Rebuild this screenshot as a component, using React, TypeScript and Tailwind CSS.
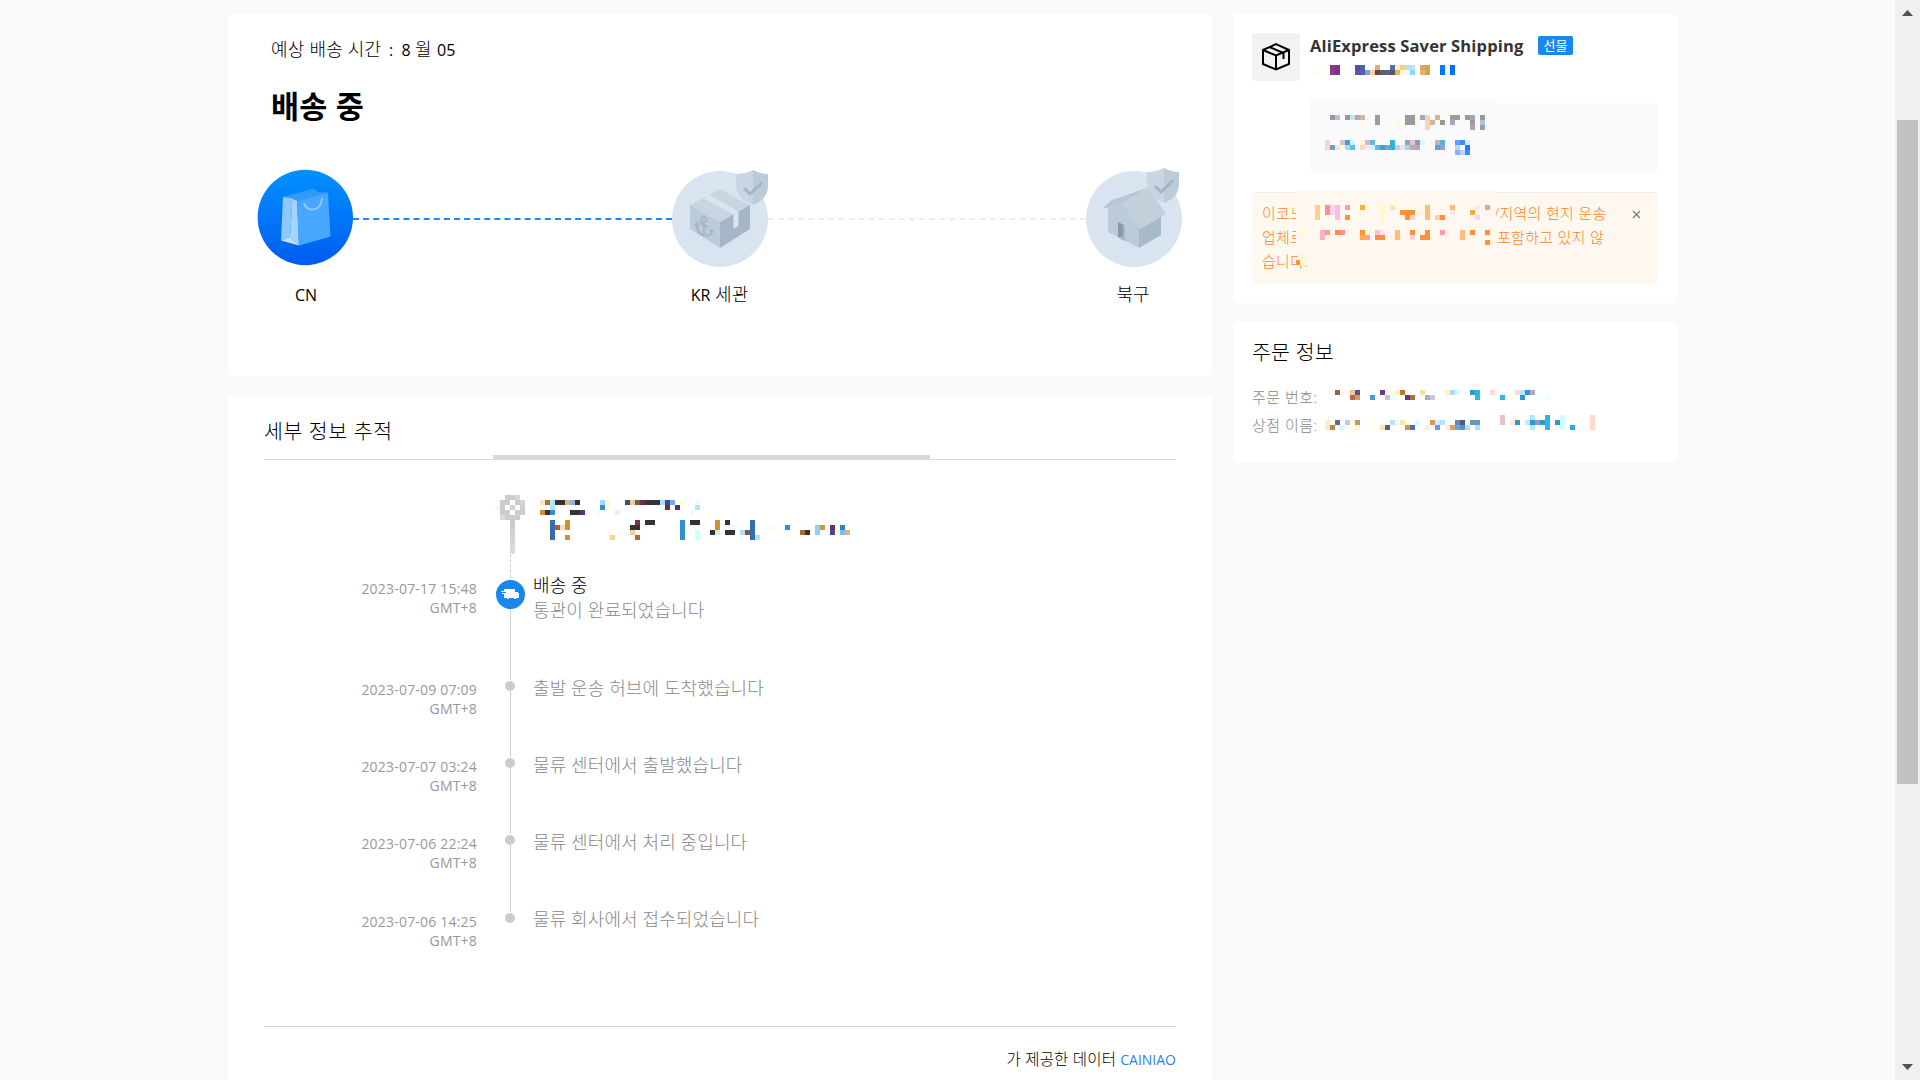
import { X } from "lucide-react";

// x, y, fill, width, height (all in 5px blocks)
type Cell = [number, number, string, number?, number?];

const CARRIER_CODE: Cell[] = [
  [0, 1, "#fffdea"], [3, 0, "#8a3a80"], [4, 0, "#7b378c"], [3, 1, "#8c3f80"], [4, 1, "#73348c"],
  [8, 0, "#5f4c9c"], [9, 0, "#5062ae"], [8, 1, "#6e4fa0"], [9, 1, "#5060b0"], [10, 1, "#6eaae0"],
  [11, 1, "#ffcc9e"], [12, 0, "#d9b26e"], [12, 1, "#5c4c3c"], [13, 1, "#606060"], [14, 1, "#5c5ca0"],
  [15, 0, "#5470b4"], [15, 1, "#585850"], [16, 0, "#fff0c0"], [16, 1, "#e8b070"], [17, 0, "#ffcc88"],
  [17, 1, "#fffcd0"], [18, 0, "#b0e0ff"], [18, 1, "#e0ffff"], [19, 0, "#b8e4ff"], [19, 1, "#90d0ff"],
  [21, 0, "#dca858"], [22, 0, "#d8a050"], [21, 1, "#e8b070"], [22, 1, "#d8a050"],
  [25, 0, "#1474ff"], [25, 1, "#006fff"], [27, 0, "#006fff", 1, 2],
];

const ADDRESS: Cell[] = [
  [1, 0, "#999"], [2, 0, "#a8c4e8"], [4, 0, "#999"], [5, 0, "#bce8fc"], [6, 0, "#c4a49c"], [7, 0, "#d4b498"],
  [8, 0, "#e8fcf8"], [10, 0, "#999", 1, 2], [16, 0, "#999", 2, 2], [18, 0, "#f8f8e4", 1, 2], [19, 0, "#a0a8c8"],
  [20, 0, "#f8d4b4", 1, 3], [22, 0, "#d4b498"], [25, 0, "#a49898"], [26, 0, "#999"], [28, 0, "#999"],
  [29, 0, "#a4a4c4"], [31, 0, "#999"], [14, 1, "#fcfcd4"], [21, 1, "#d4b498"], [23, 1, "#999"],
  [25, 1, "#a4a4c4"], [29, 1, "#a49898"], [31, 1, "#a8c4e8"], [29, 2, "#a4a4c4"], [31, 2, "#9c9cb8"],
  [32, 2, "#fcfcd4"],
  [0, 5, "#f8d4cc", 1, 2], [3, 5, "#dcbcc8"], [4, 5, "#34a4d4"], [5, 5, "#ccf4fc"], [7, 5, "#f8f8d8"],
  [8, 5, "#dcb4c8"], [9, 5, "#5cbce0"], [13, 5, "#28b4dc", 1, 2], [16, 5, "#88a4c8"], [17, 5, "#e8c4c4"],
  [18, 5, "#889cc8"], [19, 5, "#d8f8fc"], [21, 5, "#fcf8e8"], [22, 5, "#c8b0c4"], [23, 5, "#48b8e0"],
  [1, 6, "#749cc4"], [2, 6, "#f8e4d4"], [3, 6, "#fcfce0"], [4, 6, "#9cdcfc"], [5, 6, "#58c0e0"],
  [7, 6, "#f8d4cc"], [8, 6, "#fcecd8"], [9, 6, "#ccf8fc"], [10, 6, "#58c0e0"], [11, 6, "#34a4d0"],
  [12, 6, "#889cc8"], [14, 6, "#c4d0d8"], [15, 6, "#dce8f0"], [16, 6, "#c0d0d0"], [17, 6, "#b8a8c4"],
  [18, 6, "#aca8c4"], [22, 6, "#64a0d0"], [23, 6, "#9ca0c4"],
  [26, 5, "#5ca0ff"], [27, 5, "#3c8cff"], [28, 5, "#dce8ff"], [26, 6, "#b8d4ff"], [27, 6, "#fff"],
  [28, 6, "#1f7cff"], [26, 7, "#84b4ff"], [27, 7, "#b8d4ff"], [28, 7, "#3c8cff"],
];

const NOTICE: Cell[] = [
  [3, 0, "#ffcf90", 1, 3], [5, 0, "#ff9090", 1, 2], [6, 0, "#ffd0f0", 1, 2], [7, 0, "#ffbce0", 1, 3],
  [9, 0, "#ff9cac"], [12, 0, "#ffac3c"], [16, 0, "#fff8c8", 1, 3], [18, 0, "#ffe4b0"],
  [25, 0, "#ffbc74", 1, 3], [30, 0, "#ffbc74"], [35, 0, "#ffe4f4"], [37, 0, "#ffa078"],
  [20, 1, "#ff9038", 3], [30, 1, "#ffe4f4"], [34, 1, "#ffac3c"], [9, 2, "#ff9038"],
  [21, 2, "#ff9038"], [22, 2, "#ffd0f0"], [27, 2, "#ffcf90"], [28, 2, "#ff9038"], [35, 2, "#ffd0f0"],
  [0, 5, "#fff8c8"], [4, 5, "#ffacd0", 1, 2], [5, 5, "#ffa078"], [7, 5, "#ff9038"], [8, 5, "#ff9090"],
  [12, 5, "#ff9038"], [13, 5, "#fff8c8"], [15, 5, "#ffbce0"], [16, 5, "#ffe4f4"], [19, 5, "#ffbc74", 1, 2],
  [22, 5, "#ff9038"], [24, 5, "#fff8e0"], [25, 5, "#ff9038", 1, 2], [28, 5, "#ff9cac"],
  [32, 5, "#ffbc74", 1, 2], [34, 5, "#ff9038"], [37, 5, "#ff9038"], [12, 6, "#ffac3c"], [13, 6, "#ff9cac"],
  [15, 6, "#ff9038", 2], [22, 6, "#ffd0f0"], [24, 6, "#ff9038"], [29, 6, "#fff8e0"], [37, 7, "#ff9038"],
  [0, 10, "#fff8c8", 1, 2], [-0.8, 11, "#ff9038", 0.8],
];

const ORDER_NO: Cell[] = [
  [0, 0, "#966448"], [3, 0, "#f8c88c"], [4, 0, "#5f4c90"], [9, 0, "#6c3888"], [11, 0, "#fffff0"],
  [12, 0, "#fff0c0"], [13, 0, "#b87830"], [17, 0, "#ffdca0"], [22, 0, "#fff0b8"], [23, 0, "#b0d8f0"],
  [24, 0, "#d0ffff"], [27, 0, "#3098d0"], [28, 0, "#30b4e0", 1, 2], [31, 0, "#ffd8d0"], [36, 0, "#ffd8d0"],
  [37, 0, "#b0e8ff"], [38, 0, "#3098d0"], [39, 0, "#aca8c4"], [3, 1, "#b06850"], [4, 1, "#d89c50"],
  [7, 1, "#4c98dc"], [10, 1, "#c8c8d0"], [11, 1, "#e8ffff"], [14, 1, "#683090"], [15, 1, "#b07038"],
  [17, 1, "#fffff0"], [18, 1, "#98b8c8"], [19, 1, "#c8c8d0"], [22, 1, "#f0ffff"], [33, 1, "#30b4e0"],
  [34, 1, "#fffce0"], [37, 1, "#3098c0"], [40, 1, "#f0ffff"], [42, 1, "#e8ffff"],
];

const STORE_NAME: Cell[] = [
  [35, 0, "#e8c4c4", 1, 2], [38, 0, "#ffffe0"], [41, 0, "#b0e8ff"], [44, 0, "#30b4e0", 1, 3],
  [47, 0, "#ccffff", 1, 3], [53, 0, "#ffd8d0", 1, 3], [0, 1, "#fff0b0"], [2, 1, "#5c6898"], [4, 1, "#c8c8d0"],
  [5, 1, "#fffce8", 1, 3], [6, 1, "#b89c68"], [9, 1, "#ffffec", 1, 2], [13, 1, "#b0e4ff"], [14, 1, "#e8ffff"],
  [15, 1, "#ffe4b0"], [16, 1, "#ffffd8"], [18, 1, "#d0ffff"], [21, 1, "#d89c50"], [22, 1, "#c8f0ff"],
  [23, 1, "#b0e4ff"], [24, 1, "#ffffe0"], [26, 1, "#5c8cb8"], [27, 1, "#5c5078"], [28, 1, "#e0ffff"],
  [29, 1, "#6898b8", 2], [37, 1, "#ffe8d8"], [38, 1, "#3098c0"], [40, 1, "#b0f0ff"], [41, 1, "#3098c8"],
  [42, 1, "#9098c8"], [43, 1, "#3098c8"], [46, 1, "#3098c8"], [0, 2, "#ffe4dc"], [1, 2, "#c08448"],
  [2, 2, "#e8f8ff"], [3, 2, "#d0ffff"], [6, 2, "#fff0d0"], [11, 2, "#ffe4b0"], [12, 2, "#5c5890"],
  [16, 2, "#d09450"], [17, 2, "#4470b4"], [20, 2, "#fff0d0"], [22, 2, "#649cdc"], [24, 2, "#ffece0"],
  [25, 2, "#d8a468"], [26, 2, "#5ca4e4"], [27, 2, "#5090d8"], [28, 2, "#b0e0ff"], [30, 2, "#b0e0ff"],
  [38, 2, "#ffffe0"], [41, 2, "#b0e8ff"], [49, 2, "#30a8dc"],
];

const DESTINATION: Cell[] = [
  [0, 0, "#ffe9b8"], [1, 0, "#b26f35"], [2, 0, "#b0e5ff", 1, 2], [3, 0, "#333", 2], [5, 0, "#d9b48c"],
  [6, 0, "#8ab4de"], [7, 0, "#333"], [12, 0, "#a0d8ff"], [13, 0, "#f0ffcc"], [17, 0, "#2f5769"],
  [18, 0, "#ffc98f"], [19, 0, "#626245"], [20, 0, "#6b3037"], [21, 0, "#413035"], [22, 0, "#333", 2],
  [24, 0, "#a8e0ff"], [25, 0, "#364ea0"], [26, 0, "#72ade8"], [28, 0, "#ffffd0"], [31, 0, "#eaffff"],
  [12, 1, "#338ed0"], [13, 1, "#ffffd8"], [24, 1, "#e8ffff"], [25, 1, "#743035"], [27, 1, "#5e2f70"],
  [31, 1, "#b0e5ff"], [0, 2, "#d09030"], [1, 2, "#333"], [2, 2, "#338ed0"], [6, 2, "#333", 2],
  [8, 2, "#57307c"], [11, 2, "#fff8f4"], [15, 2, "#eee"], [30, 2, "#fff4f2"],
  [1, 4, "#ffffe8", 1, 4], [2, 4, "#336eb5", 1, 4], [5, 4, "#d09030", 1, 2], [19, 4, "#87303a"],
  [21, 4, "#333", 2], [28, 4, "#338ed0", 1, 4], [30, 4, "#333", 2], [35, 4, "#d09030", 1, 2],
  [37, 4, "#3d2f38"], [42, 4, "#336eb5", 1, 4], [3, 5, "#ad5c38"], [4, 5, "#f8dcc0"], [18, 5, "#333", 2],
  [38, 5, "#eaffff"], [46, 5, "#fffde0"], [49, 5, "#338ed0"], [53, 5, "#fafff0"], [55, 5, "#90ceff", 1, 2],
  [56, 5, "#d09a38"], [58, 5, "#70305a"], [60, 5, "#2f80c0"], [18, 6, "#ffcc90"], [31, 6, "#ccffff", 1, 2],
  [34, 6, "#333"], [35, 6, "#d0e8ff"], [37, 6, "#333", 2], [40, 6, "#b0e0ff"], [41, 6, "#8c5058"],
  [52, 6, "#ad6830"], [53, 6, "#333"], [57, 6, "#ffffe8"], [58, 6, "#364ea0"], [59, 6, "#ffffc8"],
  [60, 6, "#80baf0"], [61, 6, "#eab070"], [5, 7, "#d09030"], [14, 7, "#ffd090"], [19, 7, "#b06a30"],
  [43, 7, "#a8e0ff"],
];

const PIN: Cell[] = [
  [2, 0, "#ccc", 2], [4, 0, "#d6d6d6"], [1, 1, "#ccc", 2], [4, 1, "#ccc"], [3, 1, "#ccc"], [5, 1, "#d6d6d6"],
  [0, 2, "#f8f8f8"], [1, 2, "#ccc"], [2, 2, "#ccc"], [3, 1, "#fff"], [3, 2, "#d0d0d0"], [2, 2, "#fff"],
  [5, 2, "#ccc"], [1, 3, "#ccc", 2], [4, 3, "#ccc", 2], [1, 4, "#ddd"], [2, 4, "#ccc", 3],
];

const EVENTS = [
  { date: "2023-07-09 07:09", text: "출발 운송 허브에 도착했습니다" },
  { date: "2023-07-07 03:24", text: "물류 센터에서 출발했습니다" },
  { date: "2023-07-06 22:24", text: "물류 센터에서 처리 중입니다" },
  { date: "2023-07-06 14:25", text: "물류 회사에서 접수되었습니다" },
];

function Mosaic({ cells, cols, rows }: { cells: Cell[]; cols: number; rows: number }) {
  return (
    <svg
      width={cols * 5}
      height={rows * 5}
      viewBox={`0 0 ${cols} ${rows}`}
      shapeRendering="crispEdges"
      className="block shrink-0 overflow-visible"
    >
      {cells.map(([x, y, fill, w = 1, h = 1], i) => (
        <rect key={i} x={x} y={y} width={w} height={h} fill={fill} />
      ))}
    </svg>
  );
}

function BagIcon() {
  return (
    <svg width="96" height="98" viewBox="0 0 96 98" className="block">
      <defs>
        <linearGradient id="bag" x1="0" y1="0" x2="0" y2="1">
          <stop offset="0" stopColor="#0091ff" />
          <stop offset="1" stopColor="#005cf0" />
        </linearGradient>
      </defs>
      <circle cx="48.3" cy="48.5" r="47.700" fill="url(#bag)" />
      <path d="M26 28 57 19.5 61 23 71 23.5 40 32Z" fill="#3399f8" />
      <path d="M26 28 35.5 29.5 33 68 24 71.5Z" fill="#8dc8ff" />
      <path d="M35.5 29.5 40 32 42 76.500 33 68Z" fill="#a5d4ff" />
      <path d="M24 71.500 33 68 42 76.500Z" fill="#c0e0ff" />
      <path d="M40 32 71 23.500 73.500 67.500 42 76.500Z" fill="#48a6ff" />
      <path d="M47 34C49 43 64 44 65 29" fill="none" stroke="#8dc8ff" strokeWidth="2" />
    </svg>
  );
}

function Shield({ x, y }: { x: number; y: number }) {
  return (
    <g transform={`translate(${x} ${y})`}>
      <path d="M0 4Q9 4 17 0V35Q0 29 0 14Z" fill="#c9d6e2" />
      <path d="M17 0Q24 4 32 4V16Q32 29 17 35Z" fill="#bccbd8" />
      <path d="M8 18 14 24 26 12.500" fill="none" stroke="#a5b5c5" strokeWidth="3" />
    </g>
  );
}

function CustomsIcon() {
  return (
    <svg width="96" height="98" viewBox="0 0 96 98" className="block overflow-visible">
      <circle cx="48" cy="50" r="48" fill="#dae4f0" />
      <path d="M18 36 48 20 78 36 48 53Z" fill="#c9d6e2" />
      <path d="M18 36 48 53V79L18 60Z" fill="#bccbd8" />
      <path d="M48 53 78 36V60L48 79Z" fill="#a5b7c6" />
      <path d="M31.500 29.500 37.500 26 66.500 42.500V57L61.500 60V45.500Z" fill="#dae4f0" />
      <g fill="none" stroke="#a5b7c6" strokeWidth="2">
        <circle cx="32" cy="50.500" r="2.500" />
        <path d="M32 53V66M28 54 36 58M24.500 54C24.500 62 28 66 33 66.500 37 67 40 65 40 62M23 57 24.500 54 27 57.500M37.500 62 40 61.500 41.500 63.500" />
      </g>
      <Shield x={64} y={1} />
    </svg>
  );
}

function HomeIcon() {
  return (
    <svg width="96" height="98" viewBox="0 0 96 98" className="block overflow-visible">
      <circle cx="48" cy="50" r="48" fill="#dae4f0" />
      <path d="M22 38 38 34 53 58V79L22 63Z" fill="#bccbd9" />
      <path d="M53 58 75 47V66L53 79Z" fill="#a8b9c7" />
      <path d="M18 38 26 31 61 19 37 34.500 18 39.500Z" fill="#b6c6d3" />
      <path d="M36 34 62 18 80 45 54 60Z" fill="#c2d0dc" />
      <path d="M32 53 38 56V71L32 68Z" fill="#8799aa" />
      <path d="M37 56 39 57V72L32 68.500 37 67Z" fill="#a5b5c5" />
      <Shield x={61} y={-1} />
    </svg>
  );
}

function PackageIcon() {
  return (
    <svg width="28" height="28" viewBox="0 0 28 28" fill="none" stroke="#000" strokeWidth="2">
      <path d="M14 1.200 27 7V21L14 26.500 1 21V7Z" />
      <path d="M1 7 14 12.500 27 7M14 12.500V26.500M7.500 4 21.500 10V16" />
    </svg>
  );
}

function TruckIcon() {
  return (
    <svg width="19" height="11" viewBox="0 0 19 11" shapeRendering="crispEdges" className="block">
      <path d="M3 0H14V3H17L18 5V9H15V10H13V9H8V10H6V9H3V5H1V4H5V3H0V2H3Z" fill="#fff" />
    </svg>
  );
}

function Scrollbar() {
  return (
    <div className="flex h-full w-[25px] shrink-0 flex-col items-center bg-[#f0f0f0]">
      <svg width="11" height="6" viewBox="0 0 11 6" className="mt-2.5 shrink-0">
        <path d="M0 6 5.500 0 11 6Z" fill="#505050" />
      </svg>
      <div className="mt-[104px] h-[664px] w-[21px] shrink-0 bg-[#c1c1c1]" />
      <svg width="11" height="6" viewBox="0 0 11 6" className="mt-auto mb-2.5 shrink-0">
        <path d="M0 0 5.500 6 11 0Z" fill="#505050" />
      </svg>
    </div>
  );
}

function StatusCard() {
  return (
    <section className="h-[362px] shrink-0 rounded bg-white pt-5">
      <p className="ml-[43px] flex h-[30px] items-baseline text-[18px] leading-[30px] font-light text-black">
        <span className="w-[118px] tracking-[0.2px]">예상 배송 시간</span>
        <span className="w-[25px] text-base font-normal whitespace-pre">:  8</span>
        <span className="w-[22px] pl-px">월</span>
        <span className="pl-px text-base font-normal">05</span>
      </p>
      <h1 className="mt-5 ml-[43px] h-[44px] text-[30.5px] leading-[44px] font-bold tracking-[0.2px] text-black">
        배송 중
      </h1>
      <div className="mt-[41px] ml-[29px] flex w-[925px] items-start">
        <div className="w-[96px]">
          <BagIcon />
          <p className="mt-[14px] pl-[2px] text-center text-base leading-7 text-black">CN</p>
        </div>
        <div className="mt-[49px] h-0 flex-1 border-t-2 border-dashed border-[#1a8af0]" />
        <div className="w-[96px]">
          <CustomsIcon />
          <p className="mt-[13px] text-center text-[18px] leading-7 font-light text-black">
            <span className="text-base font-normal">KR</span> 세관
          </p>
        </div>
        <div className="mt-[49px] h-0 flex-1 border-t-2 border-dashed border-[#ededed]" />
        <div className="w-[96px]">
          <HomeIcon />
          <p className="mt-[13px] pr-[2px] text-center text-[18px] leading-7 font-light text-black">북구</p>
        </div>
      </div>
    </section>
  );
}

function TrackingCard() {
  return (
    <section className="h-[700px] shrink-0 rounded bg-white px-9 pt-5">
      <h2 className="h-[39px] text-[20.5px] leading-[31px] font-light tracking-[0.6px] text-black">세부 정보 추적</h2>
      <div className="flex h-[5px] items-end">
        <div className="h-px w-[229px] bg-[#d8d8d8]" />
        <div className="h-[5px] w-[437px] bg-[#d8d8d8]" />
        <div className="h-px flex-1 bg-[#d8d8d8]" />
      </div>

      <div className="mt-[35px] flex h-[84px] pl-[231px]">
        <div className="w-[30px]">
          <Mosaic cells={PIN} cols={6} rows={5} />
          <div className="ml-[15px] h-[34px] w-[5px] bg-linear-to-b from-[#c8c8c8] to-[#dedede]" />
          <div className="ml-[15px] h-6 border-l border-dashed border-[#ccc]" />
        </div>
        <div className="mt-[5px] ml-[15px]">
          <Mosaic cells={DESTINATION} cols={62} rows={8} />
        </div>
      </div>

      <div className="flex h-[101px]">
        <p className="w-[213px] text-right text-[14px] leading-[19px] tracking-[0.2px] text-[#999]">
          2023-07-17 15:48
          <br />
          GMT+8
        </p>
        <div className="mt-px ml-[19px] flex w-[29px] flex-col items-center">
          <div className="flex size-[29px] shrink-0 items-center justify-center rounded-full bg-[#1a87ee]">
            <TruckIcon />
          </div>
          <div className="w-px flex-1 bg-[#ccc]" />
        </div>
        <div className="ml-2 text-[18px] leading-[25px] font-light tracking-[0.1px]">
          <p className="-mt-[6px] text-black">배송 중</p>
          <p className="text-[#888]">통관이 완료되었습니다</p>
        </div>
      </div>

      {EVENTS.map((event, i) => (
        <div key={event.date} className="flex h-[77.200px]">
          <p className="w-[213px] text-right text-[14px] leading-[19px] tracking-[0.2px] text-[#999]">
            {event.date}
            <br />
            GMT+8
          </p>
          <div className="ml-[19px] flex w-[28px] flex-col items-center pt-px">
            <div className="size-2.5 shrink-0 rounded-full bg-[#ccc]" />
            {i < EVENTS.length - 1 && <div className="ml-px w-px flex-1 bg-[#ccc]" />}
          </div>
          <p className="-mt-[5.500px] ml-[9px] text-[18px] leading-[26px] font-light tracking-[0.1px] text-[#888]">
            {event.text}
          </p>
        </div>
      ))}

      <div className="mt-[37px] border-t border-[#d8d8d8] pt-[19px] text-right text-[15.5px] leading-[26px] font-light text-black">
        <span className="tracking-[0.2px]">가 제공한 데이터</span>{" "}
        <a className="text-[14px] font-normal text-[#2f80ed]">CAINIAO</a>
      </div>
    </section>
  );
}

function CarrierCard() {
  return (
    <section className="h-[289px] rounded bg-white px-[19px] pt-[19px]">
      <div className="flex">
        <div className="flex size-12 items-center justify-center rounded bg-[#f2f2f2]">
          <PackageIcon />
        </div>
        <div className="ml-2.5">
          <div className="flex h-8 items-center pb-1.5">
            <h3 className="w-[228px] text-[16.5px] font-bold tracking-[0.15px] whitespace-nowrap text-[#333]">
              AliExpress Saver Shipping
            </h3>
            <span className="-mt-px flex h-[19px] w-[35px] items-center justify-center rounded-xs bg-[#1a87ee] text-[13px] text-white">
              선물
            </span>
          </div>
          <div className="ml-[5px]">
            <Mosaic cells={CARRIER_CODE} cols={28} rows={2} />
          </div>
        </div>
      </div>

      <div className="mt-[22px] ml-[58px] flex h-[69px] w-[348px] rounded bg-[#fafafa]">
        <div className="-mt-[3px] h-[70px] w-[186px] bg-[#fafafa] pt-[15px] pl-[15px]">
          <Mosaic cells={ADDRESS} cols={33} rows={8} />
        </div>
      </div>

      <div className="relative mt-[20px] flex h-[92px] w-[406px] justify-between rounded border-t border-[#ededf0] bg-[#fff8f1] pt-2 pl-2.5 text-[15px] leading-6 font-light tracking-[0.3px] text-[#ff8426]">
        <div>
          <p className="flex">
            <span className="w-[232px]">이코노미</span>
            <span className="whitespace-nowrap">/지역의 현지 운송</span>
          </p>
          <p className="flex">
            <span className="w-[235px]">업체로</span>
            <span className="whitespace-nowrap">포함하고 있지 않</span>
          </p>
          <p>습니다.</p>
        </div>
        <X size={13} strokeWidth={2} className="mt-[7px] mr-[15px] text-[#777]" />
        <div className="absolute -top-[3px] left-[44px] h-[55px] w-[200px] bg-[#fff8f1] pt-[15px] pl-1">
          <Mosaic cells={NOTICE} cols={39} rows={8} />
        </div>
      </div>
    </section>
  );
}

function OrderCard() {
  return (
    <section className="h-[140px] rounded bg-white px-[19px] pt-[14px]">
      <h2 className="h-[46px] text-[20.5px] leading-[32px] font-light tracking-[0.2px] text-black">주문 정보</h2>
      <div className="flex h-7 text-[15px] leading-[30px] font-light text-[#888]">
        <span className="w-[83px] tracking-[0.5px]">주문 번호:</span>
        <div className="mt-2">
          <Mosaic cells={ORDER_NO} cols={43} rows={2} />
        </div>
      </div>
      <div className="flex h-7 text-[15px] leading-[30px] font-light text-[#888]">
        <span className="w-[73px] tracking-[0.5px]">상점 이름:</span>
        <div className="mt-[5px]">
          <Mosaic cells={STORE_NAME} cols={54} rows={4} />
        </div>
      </div>
    </section>
  );
}

export default function App() {
  return (
    <div className="flex h-screen w-full overflow-hidden bg-[#f8fafc] font-['Open_Sans','Noto_Sans_CJK_KR',sans-serif]">
      <main className="flex flex-1 gap-[21px] pt-[14px] pl-[228px]">
        <div className="flex w-[984px] flex-col gap-5">
          <StatusCard />
          <TrackingCard />
        </div>
        <div className="flex w-[444px] flex-col gap-[19px]">
          <CarrierCard />
          <OrderCard />
        </div>
      </main>
      <Scrollbar />
    </div>
  );
}
